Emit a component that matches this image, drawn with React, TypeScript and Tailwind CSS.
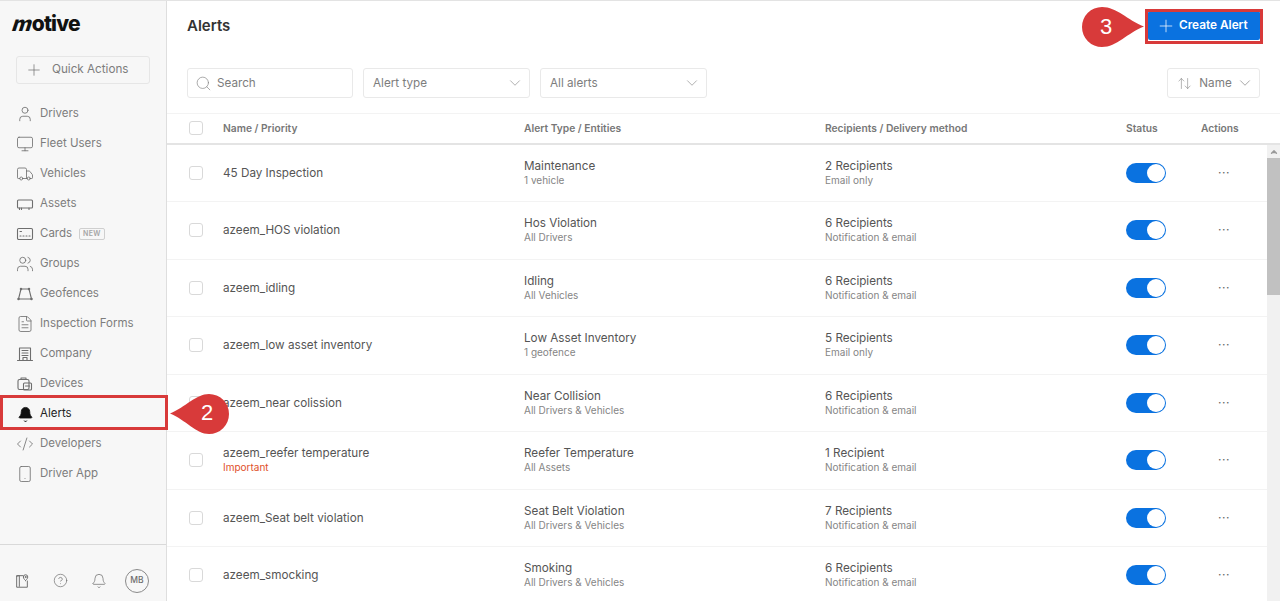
import React from "react";
import { Plus, User, Monitor, Truck, Users, FileText, CodeXml, Smartphone, CircleHelp, Bell, Search, ChevronDown, ArrowUpDown, ChevronUp } from "lucide-react";

const Ic = ({ children }: { children: React.ReactNode }) => (
  <svg width="18" height="18" viewBox="0 0 18 18" fill="none" stroke="currentColor" strokeWidth="1.1" strokeLinecap="round" strokeLinejoin="round">{children}</svg>
);
const Assets = () => <Ic><rect x="1.5" y="5" width="15" height="8" rx="1" /><path d="M3.5 13v1.5M5.5 13v1.5M13 13v1.5" /></Ic>;
const Cards = () => <Ic><rect x="1.5" y="3.5" width="15" height="11" rx="1.2" /><path d="M4 6.5h1.5M4 11h1M7 11h1M10 11h1M13 11h1" /></Ic>;
const Geo = () => <Ic><path d="M5 4h8l2.500 10h-13z" /><circle cx="5" cy="4" r=".7" fill="currentColor" /><circle cx="13" cy="4" r=".7" fill="currentColor" /><circle cx="2.500" cy="14" r=".7" fill="currentColor" /><circle cx="15.500" cy="14" r=".7" fill="currentColor" /></Ic>;
const Company = () => <Ic><path d="M3.500 15V3h11v12M1.500 15.500h15M6 5.500h6M6 8h6M6 10.500h6M7 15v-2.500h4V15" /></Ic>;
const Devices = () => <Ic><rect x="2" y="4.500" width="11" height="10" rx="1.500" /><path d="M5 4.500V3h5v1.500" /><rect x="7.500" y="8" width="8" height="7" rx="1" /><path d="M9.500 11h4" /></Ic>;
const MapIc = () => <Ic><path d="M10 3H3v13h12V9" /><path d="M3 3.500 6 3v12" /><path d="M13 8.500s-2.500-2-2.500-4a2.500 2.500 0 0 1 5 0c0 2-2.500 4-2.500 4z" /><circle cx="13" cy="4.500" r=".6" /></Ic>;

const nav: [string, React.ReactNode][] = [
  ["Drivers", <User size={18} strokeWidth={1.1} />],
  ["Fleet Users", <Monitor size={18} strokeWidth={1.1} />],
  ["Vehicles", <Truck size={18} strokeWidth={1.1} />],
  ["Assets", <Assets />],
  ["Cards", <Cards />],
  ["Groups", <Users size={18} strokeWidth={1.1} />],
  ["Geofences", <Geo />],
  ["Inspection Forms", <FileText size={18} strokeWidth={1.1} />],
  ["Company", <Company />],
  ["Devices", <Devices />],
  ["Alerts", <Bell size={17} strokeWidth={1.1} fill="currentColor" />],
  ["Developers", <CodeXml size={18} strokeWidth={1.1} />],
  ["Driver App", <Smartphone size={18} strokeWidth={1.1} />],
];

const rows = [
  ["45 Day Inspection", "", "Maintenance", "1 vehicle", "2 Recipients", "Email only"],
  ["azeem_HOS violation", "", "Hos Violation", "All Drivers", "6 Recipients", "Notification & email"],
  ["azeem_idling", "", "Idling", "All Vehicles", "6 Recipients", "Notification & email"],
  ["azeem_low asset inventory", "", "Low Asset Inventory", "1 geofence", "5 Recipients", "Email only"],
  ["azeem_near colission", "", "Near Collision", "All Drivers & Vehicles", "6 Recipients", "Notification & email"],
  ["azeem_reefer temperature", "Important", "Reefer Temperature", "All Assets", "1 Recipient", "Notification & email"],
  ["azeem_Seat belt violation", "", "Seat Belt Violation", "All Drivers & Vehicles", "7 Recipients", "Notification & email"],
  ["azeem_smocking", "", "Smoking", "All Drivers & Vehicles", "6 Recipients", "Notification & email"],
];

const Check = () => <span className="block w-[14px] h-[14px] rounded-[3px] border border-[#d9d9d9] bg-white" />;
const grid = "grid grid-cols-[22px_34px_301px_301px_301px_75px_1fr] items-center";

function Select({ label, w }: { label: string; w: string }) {
  return (
    <div className={`${w} h-[30px] flex items-center justify-between pl-[9px] pr-[5px] border border-[#e9e9e9] rounded-[3px] text-[#7d7d7d]`}>
      <span className="pt-[2px]">{label}</span>
      <ChevronDown size={18} strokeWidth={0.9} className="text-[#8a8a8a]" />
    </div>
  );
}

export default function App() {
  return (
    <div className="relative w-[1280px] h-[601px] overflow-hidden bg-white flex border-t border-[#e3e3e3] text-[11.7px] text-[#555]" style={{ fontFamily: "Inter, 'Noto Sans', sans-serif" }}>
      <aside className="w-[167px] shrink-0 bg-[#f7f7f7] border-r border-[#dedede] flex flex-col">
        <div className="h-[55px] pl-[13px] pt-[10px] text-[21px] leading-[26px] font-extrabold text-[#111] tracking-[-0.8px]">
          <span className="inline-block -skew-x-[18deg]">m</span>otive
        </div>
        <div className="mx-[16px] h-[28px] flex items-center gap-[9px] pl-[8px] border border-[#e6e6e6] rounded-[3px] text-[#7d7d7d]">
          <Plus size={18} strokeWidth={0.9} className="text-[#666]" />
          <span>Quick Actions</span>
        </div>
        <nav className="mt-[15px] flex flex-col">
          {nav.map(([n, icon]) => (
            <div key={n} className={`h-[30px] flex items-center pl-[16px] gap-[15px] text-[11.5px] ${n === "Alerts" ? "text-[#222]" : "text-[#7d7d7d]"}`}>
              <span className={`w-[18px] flex justify-center ${n === "Alerts" ? "text-[#111]" : "text-[#6e6e6e]"}`}>{icon}</span>
              <span className="-ml-[9px]">{n}</span>
              {n === "Cards" && <span className="-ml-[8px] border border-[#cfcfcf] rounded-[2px] px-[3px] text-[7px] leading-[10px] font-semibold text-[#a5a5a5] tracking-[0.3px]">NEW</span>}
            </div>
          ))}
        </nav>
        <div className="mt-auto h-[57px] pt-[15px] border-t border-[#d9d9d9] flex items-center pl-[14px] text-[#6e6e6e]">
          <span className="w-[16px] flex justify-center"><MapIc /></span>
          <CircleHelp size={15} strokeWidth={1.1} className="ml-[23px]" />
          <Bell size={16} strokeWidth={1.1} className="ml-[23px]" />
          <span className="ml-[18px] w-[24px] h-[24px] rounded-full border border-[#8a8a8a] flex items-center justify-center text-[8.5px] font-medium">MB</span>
        </div>
      </aside>

      <main className="flex-1 min-w-0 flex flex-col">
        <header className="h-[50px] shrink-0 flex items-center justify-between pl-[20px] pr-[20px]">
          <h1 className="text-[15px] font-semibold text-[#333]">Alerts</h1>
          <button className="w-[112px] h-[29px] -mt-[1px] flex items-center justify-start pl-[8px] gap-[3px] rounded-[2px] bg-[#0a72e0] text-white text-[11.8px] font-semibold">
            <Plus size={20} strokeWidth={0.9} />
            <span className="pt-[1px]">Create Alert</span>
          </button>
        </header>
        <div className="h-[30px] mt-[17px] shrink-0 flex items-center gap-[10px] pl-[20px] pr-[20px]">
          <div className="w-[166px] h-[30px] flex items-center gap-[5px] pl-[7px] border border-[#e9e9e9] rounded-[3px] text-[#7d7d7d]">
            <Search size={17} strokeWidth={0.9} />
            <span className="pt-[2px]">Search</span>
          </div>
          <Select label="Alert type" w="w-[167px]" />
          <Select label="All alerts" w="w-[167px]" />
          <div className="ml-auto w-[93px] h-[30px] flex items-center justify-between pl-[9px] pr-[5px] border border-[#e9e9e9] rounded-[3px] text-[#7d7d7d]">
            <ArrowUpDown size={15} strokeWidth={0.9} />
            <span className="ml-[3px] pt-[2px]">Name</span>
            <ChevronDown size={18} strokeWidth={0.9} />
          </div>
        </div>
        <div className={`${grid} h-[31.5px] mt-[15px] shrink-0 border-t border-[#f3f3f3] border-b-2 border-b-[#e4e4e4] text-[10.25px] font-semibold text-[#777]`}>
          <span className="col-start-2"><Check /></span>
          <span>Name / Priority</span>
          <span>Alert Type / Entities</span>
          <span>Recipients / Delivery method</span>
          <span>Status</span>
          <span>Actions</span>
        </div>
        <div className="flex-1 min-h-0 flex">
          <div className="flex-1 min-w-0 overflow-hidden">
            {rows.map((r) => (
              <div key={r[0]} className={`${grid} h-[57.5px] border-b border-[#f3f3f3]`}>
                <span className="col-start-2"><Check /></span>
                <div className="leading-[15px] pt-[1px]">
                  <div className="text-[#555]">{r[0]}</div>
                  {r[1] && <div className="-mt-[1px] text-[10px] text-[#e0502a]">{r[1]}</div>}
                </div>
                <div className="leading-[15px] pt-[1px]">
                  <div>{r[2]}</div>
                  <div className="-mt-[1px] text-[10px] text-[#858585]">{r[3]}</div>
                </div>
                <div className="leading-[15px] pt-[1px]">
                  <div>{r[4]}</div>
                  <div className="-mt-[1px] text-[10px] text-[#858585]">{r[5]}</div>
                </div>
                <span className="w-[40px] h-[20px] rounded-full bg-[#0a72e0] flex items-center justify-end pr-[1px]">
                  <span className="w-[18px] h-[18px] rounded-full bg-white" />
                </span>
                <span className="pl-[17px] text-[#666] text-[12px] leading-none tracking-[0.5px]">···</span>
              </div>
            ))}
          </div>
          <div className="w-[13px] shrink-0 bg-[#f1f1f1] flex flex-col items-center">
            <ChevronUp size={10} strokeWidth={3} fill="#999" className="text-[#999] mt-[2px]" />
            <div className="w-full mt-[1px] h-[137px] bg-[#c1c1c1]" />
          </div>
        </div>
      </main>

      <div className="absolute left-0 top-[394px] w-[168px] h-[35px] border-[3px] border-[#d83a3a]" />
      <div className="absolute left-[1145px] top-[8px] w-[118px] h-[35px] border-[3px] border-[#d83a3a]" />
      <svg className="absolute left-[170px] top-[392px]" width="60" height="42" viewBox="0 0 60 42">
        <path d="M0 20.500 C16 14 26 1 39 1 A20 20 0 0 1 39 41 C26 41 16 27 0 20.500z" fill="#d83a3a" />
      </svg>
      <span className="absolute left-[201px] top-[399px] text-[22px] leading-[26px] text-white" style={{ fontFamily: "'Liberation Sans', sans-serif" }}>2</span>
      <svg className="absolute left-[1081px] top-[5px]" width="63" height="42" viewBox="0 0 63 42">
        <path d="M63 20.500 C46 14 36 1 21 1 A20 20 0 0 0 21 41 C36 41 46 27 63 20.500z" fill="#d83a3a" />
      </svg>
      <span className="absolute left-[1100px] top-[13px] text-[22px] leading-[26px] text-white" style={{ fontFamily: "'Liberation Sans', sans-serif" }}>3</span>
    </div>
  );
}
